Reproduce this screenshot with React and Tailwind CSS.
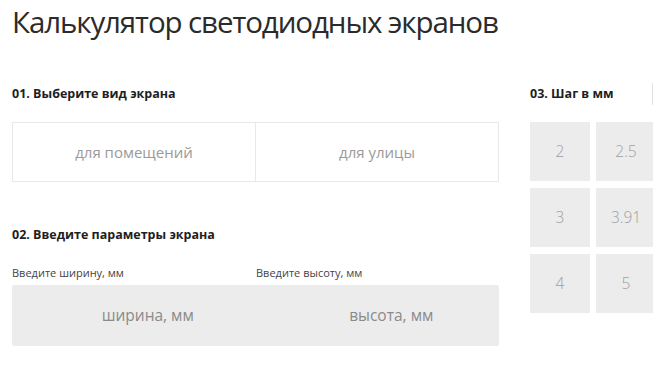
export default function App() {
  const steps = ["2", "2.5", "3", "3.91", "4", "5"];

  return (
    <div className="w-[653px] h-[377px] overflow-hidden bg-white pl-3 font-['Open_Sans',sans-serif] text-[#222]">
      <h1 className="pt-[2px] text-[29.5px] leading-[40px] tracking-[-1.1px] text-[#2b2b2b]">
        Калькулятор светодиодных экранов
      </h1>

      <div className="mt-[45px] flex">
        {/* left column */}
        <div className="w-[487px] shrink-0">
          <h2 className="text-[12.5px] font-bold leading-[14px] text-[#1e1e1e]">
            01. Выберите вид экрана
          </h2>

          <div className="mt-[21px] flex h-[60px] border border-[#e8e8e8]">
            <button className="flex-1 border-r border-[#e8e8e8] text-[15px] text-[#9a9a9a]">
              для помещений
            </button>
            <button className="flex-1 text-[15px] text-[#9a9a9a]">
              для улицы
            </button>
          </div>

          <h2 className="mt-[46px] text-[12.5px] font-bold leading-[14px] text-[#1e1e1e]">
            02. Введите параметры экрана
          </h2>

          <div className="mt-[24px] flex text-[11px] leading-[14px] text-[#444]">
            <span className="w-[244px]">Введите ширину, мм</span>
            <span>Введите высоту, мм</span>
          </div>

          <div className="mt-[5px] flex h-[61px] rounded-[2px] bg-[#ececec]">
            <div className="flex flex-1 items-center justify-center pl-7 text-[15.5px] text-[#8a8a8a]">
              ширина, мм
            </div>
            <div className="flex flex-1 items-center justify-center pl-7 text-[15.5px] text-[#8a8a8a]">
              высота, мм
            </div>
          </div>
        </div>

        {/* right column */}
        <div className="ml-[31px] w-[126px] shrink-0">
          <div className="flex h-[14px] items-center justify-between">
            <h2 className="text-[12.5px] font-bold leading-[14px] text-[#1e1e1e]">
              03. Шаг в мм
            </h2>
            <div className="h-[22px] w-[4px] shrink-0 border-l border-[#e2e2e2]" />
          </div>
          <div className="mt-[21px] grid grid-cols-[60px_60px] gap-x-[6px] gap-y-[7px]">
            {steps.map((s) => (
              <button
                key={s}
                className="flex h-[59px] items-center justify-center bg-[#ececec] text-[15.5px] font-light text-[#a0a0a0]"
              >
                {s}
              </button>
            ))}
          </div>
        </div>
      </div>
    </div>
  );
}
